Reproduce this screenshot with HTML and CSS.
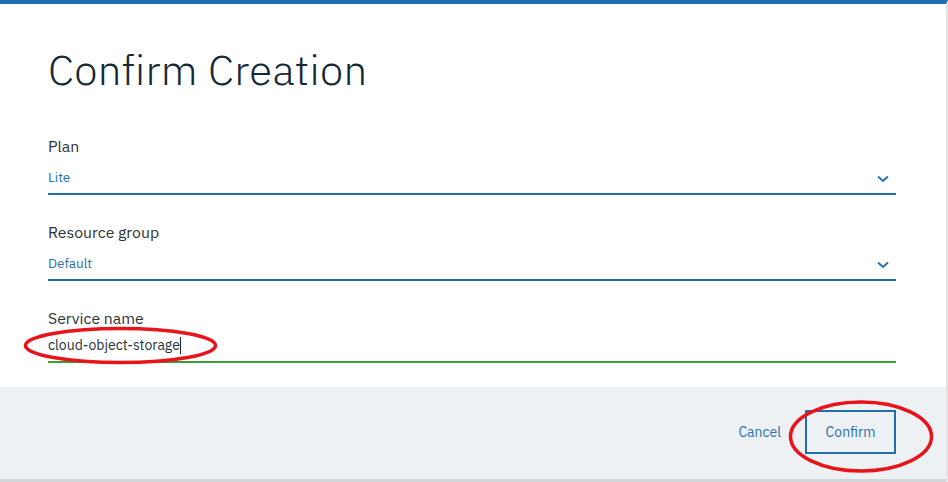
FILE: index.html
```html
<!DOCTYPE html>
<html lang="en">
<head>
<meta charset="utf-8">
<title>Confirm Creation</title>
<link rel="stylesheet" href="styles.css">
</head>
<body>
<div class="modal">
  <div class="modal-body">
    <h1 class="title">Confirm Creation</h1>
    <div class="field">
      <label class="label">Plan</label>
      <div class="select">
        <span class="value">Lite</span>
        <svg class="chevron" width="12" height="8" viewBox="0 0 12 8"><path d="M1 1.5 L6 6 L11 1.5" fill="none" stroke="#2c72b1" stroke-width="2"/></svg>
      </div>
    </div>
    <div class="field">
      <label class="label">Resource group</label>
      <div class="select">
        <span class="value">Default</span>
        <svg class="chevron" width="12" height="8" viewBox="0 0 12 8"><path d="M1 1.5 L6 6 L11 1.5" fill="none" stroke="#2c72b1" stroke-width="2"/></svg>
      </div>
    </div>
    <div class="field field-last">
      <label class="label">Service name</label>
      <div class="input"><span class="input-text">cloud-object-storage</span><span class="caret"></span></div>
    </div>
  </div>
  <div class="modal-footer">
    <button class="btn-cancel">Cancel</button>
    <button class="btn-confirm">Confirm</button>
  </div>
  <svg class="annot" width="948" height="482" viewBox="0 0 948 482">
    <ellipse cx="120.5" cy="345.5" rx="95" ry="17" fill="none" stroke="#e8141c" stroke-width="3.5"/>
    <ellipse cx="861" cy="436.5" rx="70.5" ry="34.5" fill="none" stroke="#e8141c" stroke-width="3.5"/>
  </svg>
</div>
</body>
</html>
```
FILE: styles.css
```css
* { box-sizing: border-box; }
html, body { margin: 0; padding: 0; background: #ffffff; }
body { font-family: "IBM Plex Sans", "Open Sans", "Noto Sans", sans-serif; }
.modal {
  position: relative;
  width: 948px;
  height: 482px;
  border-top: 4px solid #1f6fb0;
  border-right: 2px solid #e2e4e6;
  display: flex;
  flex-direction: column;
  overflow: hidden;
}
.modal-body {
  padding: 0 50px 0 48px;
  flex: 1;
}
.title {
  margin: 36px 0 0;
  font-size: 42px;
  font-weight: 300;
  line-height: 60px;
  color: #152935;
  letter-spacing: 0.3px;
}
.field { margin-top: 36px; }
.field + .field { margin-top: 27px; }
.label {
  display: block;
  font-size: 15.8px;
  line-height: 20px;
  color: #2e3236;
}
.select {
  display: flex;
  align-items: center;
  justify-content: space-between;
  height: 39px;
  border-bottom: 2px solid #1f6fb0;
  padding-right: 8px;
  padding-top: 5px;
}
.value {
  font-size: 13.5px;
  color: #2c72b1;
}
.chevron { margin-top: 4px; margin-right: -1px; }
.input {
  display: flex;
  align-items: center;
  height: 35px;
  border-bottom: 2px solid #37a02f;
  padding-top: 1px;
}
.input-text {
  font-size: 14px;
  color: #27323c;
}
.caret {
  display: inline-block;
  width: 1px;
  height: 17px;
  background: #152935;
}
.modal-footer {
  height: 95px;
  background: #eef1f4;
  border-bottom: 3px solid #d3d6d9;
  display: flex;
  align-items: center;
  justify-content: flex-end;
  padding-right: 50px;
  padding-bottom: 2px;
}
.btn-cancel {
  background: none;
  border: none;
  font-family: inherit;
  font-size: 14px;
  color: #2c72b1;
  padding: 0;
  margin-right: 24px;
}
.btn-confirm {
  background: none;
  border: 2px solid #1f6fb0;
  font-family: inherit;
  font-size: 14px;
  color: #2c72b1;
  width: 91px;
  height: 44px;
  padding: 0;
}
.annot {
  position: absolute;
  left: 0;
  top: -4px;
  pointer-events: none;
}
```
